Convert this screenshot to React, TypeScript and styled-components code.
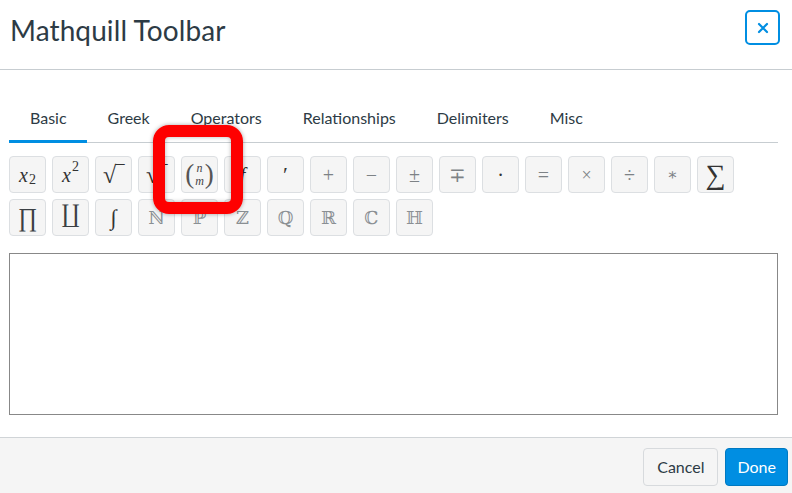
import React from "react";
import styled, { createGlobalStyle } from "styled-components";

const Global = createGlobalStyle`
  html, body { margin: 0; padding: 0; background: #fff; }
  body { font-family: Lato, "Open Sans", sans-serif; color: #2d3b45; }
  * { box-sizing: border-box; }
`;

const Page = styled.div`
  position: relative;
  width: 792px;
  height: 493px;
  overflow: hidden;
  display: flex;
  flex-direction: column;
`;

const Header = styled.header`
  height: 70px;
  border-bottom: 1px solid #c7cdd1;
  display: flex;
  align-items: flex-start;
  justify-content: space-between;
  padding: 10px 12px 0 10px;
  flex-shrink: 0;
`;

const Title = styled.h1`
  margin: 0;
  margin-top: 2px;
  font-size: 28px;
  line-height: 36px;
  font-weight: 400;
  color: #2d3b45;
  letter-spacing: 0.1px;
`;

const CloseButton = styled.button`
  width: 35px;
  height: 35px;
  border: 2px solid #008ee2;
  border-radius: 5px;
  background: #fff;
  color: #008ee2;
  display: flex;
  align-items: center;
  justify-content: center;
  padding: 0;
`;

const Body = styled.div`
  flex: 1;
  padding: 36px 14px 0 9px;
  display: flex;
  flex-direction: column;
`;

const TabList = styled.div`
  display: flex;
  height: 37px;
  border-bottom: 1px solid #c7cdd1;
`;

const Tab = styled.div<{ $active?: boolean }>`
  padding: 0 20px 0 21px;
  font-size: 16px;
  color: #2d3b45;
  line-height: 24px;
  margin-bottom: -1px;
  border-bottom: 3px solid ${(p) => (p.$active ? "#008ee2" : "transparent")};
`;

const ButtonGrid = styled.div`
  display: flex;
  flex-wrap: wrap;
  gap: 6px;
  max-width: 740px;
  margin-top: 13px;
`;

const SymButton = styled.div<{ $size?: number; $faint?: boolean }>`
  width: 37px;
  height: 37px;
  border: 1px solid #dcdfe2;
  border-radius: 4px;
  background: #f5f5f5;
  display: flex;
  align-items: center;
  justify-content: center;
  font-family: "Liberation Serif", "DejaVu Serif", serif;
  font-size: ${(p) => p.$size ?? 20}px;
  color: ${(p) => (p.$faint ? "#7d8286" : "#333")};
  line-height: 1;
`;

const It = styled.i`
  font-style: italic;
`;

const Sub = styled.span`
  font-size: 14px;
  position: relative;
  top: 5px;
  margin-left: 1px;
`;

const Sup = styled.span`
  font-size: 14px;
  position: relative;
  top: -8px;
  margin-left: 1px;
`;

const Paren = styled.span`
  font-size: 27px;
  line-height: 27px;
  font-weight: 300;
  color: #555;
`;

const Stack = styled.span`
  display: inline-flex;
  flex-direction: column;
  align-items: center;
  font-style: italic;
  font-size: 12px;
  line-height: 13px;
  padding: 0 1px;
  color: #444;
`;

const Big = styled.span<{ $flip?: boolean }>`
  font-family: "Liberation Serif", serif;
  font-weight: 300;
  color: #3a3f44;
  display: inline-block;
  transform: scaleX(0.9) ${(p) => (p.$flip ? "rotate(180deg)" : "")};
`;

const DS = styled.span`
  font-family: "DejaVu Serif", "DejaVu Sans", serif;
  font-size: 18px;
  color: #8a8f93;
`;

const Editor = styled.div`
  margin-top: 17px;
  height: 162px;
  border: 1px solid #888;
  background: #fff;
`;

const Footer = styled.footer`
  height: 56px;
  border-top: 1px solid #d0d4d7;
  background: #f5f5f5;
  display: flex;
  align-items: center;
  justify-content: flex-end;
  gap: 7px;
  padding: 0 4px 0 0;
  flex-shrink: 0;
`;

const FooterButton = styled.button<{ $primary?: boolean }>`
  height: 38px;
  padding: 0 ${(p) => (p.$primary ? 11 : 13)}px;
  border-radius: 4px;
  font-family: Lato, sans-serif;
  font-size: 16px;
  border: 1px solid ${(p) => (p.$primary ? "#0079c1" : "#d7dadd")};
  background: ${(p) => (p.$primary ? "#008ee2" : "#f5f5f5")};
  color: ${(p) => (p.$primary ? "#fff" : "#2d3b45")};
  margin-top: 2px;
`;

const Highlight = styled.div`
  position: absolute;
  left: 153px;
  top: 125px;
  width: 90px;
  height: 89px;
  border: 12px solid #fe0000;
  border-radius: 16px;
  box-shadow: 0 0 4px rgba(0, 0, 0, 0.35), inset 0 0 4px rgba(0, 0, 0, 0.3);
`;

const tabs = ["Basic", "Greek", "Operators", "Relationships", "Delimiters", "Misc"];

export default function App() {
  return (
    <>
      <Global />
      <Page>
        <Header>
          <Title>Mathquill Toolbar</Title>
          <CloseButton aria-label="Close">
            <svg width="12" height="12" viewBox="0 0 12 12">
              <path d="M2 2 L10 10 M10 2 L2 10" stroke="#008ee2" strokeWidth="2.2" strokeLinecap="round" />
            </svg>
          </CloseButton>
        </Header>
        <Body>
          <TabList>
            {tabs.map((t, i) => (
              <Tab key={t} $active={i === 0}>
                {t}
              </Tab>
            ))}
          </TabList>
          <ButtonGrid>
            <SymButton>
              <It>x</It>
              <Sub>2</Sub>
            </SymButton>
            <SymButton>
              <It>x</It>
              <Sup>2</Sup>
            </SymButton>
            <SymButton $size={24}>√‾</SymButton>
            <SymButton $size={24}>√‾</SymButton>
            <SymButton>
              <Paren>(</Paren>
              <Stack>
                <span>n</span>
                <span>m</span>
              </Stack>
              <Paren>)</Paren>
            </SymButton>
            <SymButton>
              <It>f</It>
            </SymButton>
            <SymButton $size={22}>′</SymButton>
            <SymButton $size={20} $faint>+</SymButton>
            <SymButton $size={20} $faint>−</SymButton>
            <SymButton $size={20} $faint>±</SymButton>
            <SymButton $size={20} $faint>∓</SymButton>
            <SymButton $size={20}>·</SymButton>
            <SymButton $size={20} $faint>=</SymButton>
            <SymButton $size={18} $faint>×</SymButton>
            <SymButton $size={20} $faint>÷</SymButton>
            <SymButton $size={16} $faint>∗</SymButton>
            <SymButton $size={28}>∑</SymButton>
            <SymButton $size={26}>
              <Big>∏</Big>
            </SymButton>
            <SymButton $size={26}>
              <Big $flip>∏</Big>
            </SymButton>
            <SymButton $size={22}>
              <It>∫</It>
            </SymButton>
            <SymButton>
              <DS>ℕ</DS>
            </SymButton>
            <SymButton>
              <DS>ℙ</DS>
            </SymButton>
            <SymButton>
              <DS>ℤ</DS>
            </SymButton>
            <SymButton>
              <DS>ℚ</DS>
            </SymButton>
            <SymButton>
              <DS>ℝ</DS>
            </SymButton>
            <SymButton>
              <DS>ℂ</DS>
            </SymButton>
            <SymButton>
              <DS>ℍ</DS>
            </SymButton>
          </ButtonGrid>
          <Editor />
        </Body>
        <Footer>
          <FooterButton>Cancel</FooterButton>
          <FooterButton $primary>Done</FooterButton>
        </Footer>
        <Highlight />
      </Page>
    </>
  );
}
